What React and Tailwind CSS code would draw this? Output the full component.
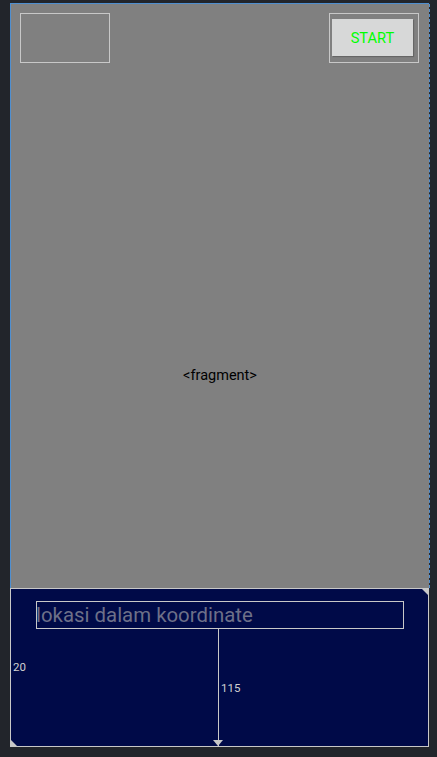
export default function App() {
  return (
    <div className="w-[437px] h-[757px] bg-[#22252b] pt-[3px] pl-[10px]" style={{ fontFamily: "Roboto, 'Liberation Sans', sans-serif" }}>
      <div className="w-[419px] h-[744px] flex flex-col">
        {/* fragment area */}
        <div className="relative h-[585px] bg-[#808080] border-l border-t border-[#4f8fd0] flex flex-col">
          <div className="absolute right-[-1px] top-0 bottom-0 w-px border-r border-dashed border-[#4f8fd0]" />
          <div className="flex justify-between pt-[9px] pl-[9px] pr-[10px]">
            <div className="w-[90px] h-[50px] border border-[#c8c8c8]" />
            <div className="w-[90px] h-[50px] border border-[#c8c8c8] pl-[2px] pt-[5px]">
              <div className="w-[81px] h-[37px] bg-[#d7d8d8] shadow-[1px_1px_1px_rgba(0,0,0,0.2)] flex items-center justify-center text-[14.7px] text-[#00ff00] pt-px">
                START
              </div>
            </div>
          </div>
          <div className="flex-1 flex items-center justify-center pt-[101px] text-[14.5px] text-black">
            &lt;fragment&gt;
          </div>
        </div>
        {/* bottom panel */}
        <div className="relative h-[159px] bg-[#000a48] border border-[#c8c8c8] pl-[25px] pt-[12px]">
          <div className="w-[368px] h-[28px] border border-[#c8c8c8] flex items-center text-[20.4px] text-[#6d7088] leading-none pt-px">
            <span className="-ml-[1px]">lokasi dalam koordinate</span>
          </div>
          <div className="absolute left-[2px] top-[70px] text-[11.5px] text-[#d0d0d0]">20</div>
          <div className="absolute left-[207px] top-[40px] bottom-0 w-px bg-[#c8c8c8]" />
          <div className="absolute left-[202px] bottom-0 w-0 h-0 border-l-[5px] border-r-[5px] border-t-[6px] border-l-transparent border-r-transparent border-t-[#c8c8c8]" />
          <div className="absolute left-[210px] top-[91px] text-[11.5px] text-[#d0d0d0]">115</div>
          <div className="absolute left-0 bottom-0 w-0 h-0 border-b-[6px] border-r-[6px] border-b-[#c8c8c8] border-r-transparent" />
          <div className="absolute right-0 top-0 w-0 h-0 border-t-[6px] border-l-[6px] border-t-[#c8c8c8] border-l-transparent" />
        </div>
      </div>
    </div>
  );
}
